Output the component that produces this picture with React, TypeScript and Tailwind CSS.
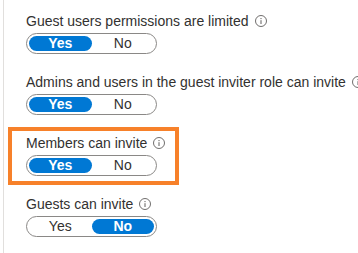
import React from "react"

type Row = { label: string; value: boolean; highlight?: boolean }

const rows: Row[] = [
  { label: "Guest users permissions are limited", value: true },
  { label: "Admins and users in the guest inviter role can invite", value: true },
  { label: "Members can invite", value: true, highlight: true },
  { label: "Guests can invite", value: false },
]

function InfoIcon() {
  return (
    <svg width="12" height="12" viewBox="0 0 12 12" className="shrink-0">
      <circle cx="6" cy="6" r="5.5" fill="none" stroke="#605e5c" strokeWidth="0.9" />
      <circle cx="6" cy="3.6" r="0.7" fill="#605e5c" />
      <path d="M6 5.2v3.8" stroke="#605e5c" strokeWidth="1" />
    </svg>
  )
}

function YesNo({ value }: { value: boolean }) {
  const on = "flex-1 h-[15px] rounded-full bg-[#0078d4] text-white font-semibold flex items-center justify-center"
  const off = "flex-1 h-[15px] rounded-full text-[#323130] flex items-center justify-center"
  return (
    <div className="w-[131px] h-[21px] rounded-full border border-[#8a8886] flex items-center px-[2px] text-[14px]">
      <div className={value ? on : off}>Yes</div>
      <div className={value ? off : on}>No</div>
    </div>
  )
}

export default function App() {
  return (
    <div
      className="w-[358px] h-[253px] bg-white overflow-hidden"
      style={{ fontFamily: '"Liberation Sans", Arial, sans-serif' }}
    >
      <div className="ml-[3px] h-full border-l border-[#e1dfdd] pt-[5px] pl-[4px] flex flex-col items-start gap-[3px]">
        {rows.map((r) => (
          <div
            key={r.label}
            className={`border-4 pl-[14px] pr-[10px] pt-[2px] pb-[5px] flex flex-col gap-[2px] ${
              r.highlight ? "border-[#f7812a]" : "border-transparent"
            }`}
          >
            <div className="h-[20px] flex items-center gap-[6px] text-[14px] text-[#323130] whitespace-nowrap">
              {r.label}
              <InfoIcon />
            </div>
            <YesNo value={r.value} />
          </div>
        ))}
      </div>
    </div>
  )
}
